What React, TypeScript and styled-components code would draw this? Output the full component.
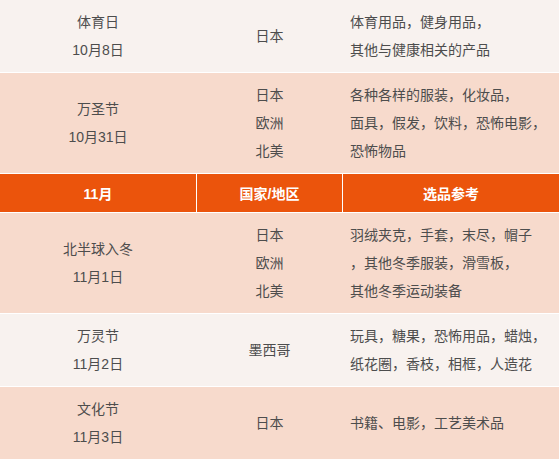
import React from "react";
import styled, { createGlobalStyle } from "styled-components";

type Tone = "light" | "peach";

interface rowInterface {
  tone: Tone;
  height: number;
  name: string[];
  places: string[];
  goods: string[];
}

const GlobalStyle = createGlobalStyle`
  html, body {
    margin: 0;
    padding: 0;
    background: #fff;
  }
  body {
    font-family: "Liberation Sans", "Noto Sans CJK SC", sans-serif;
    font-size: 14px;
    color: #4d4d4d;
  }
`;

const rowsBefore: rowInterface[] = [
  {
    tone: "light",
    height: 72,
    name: ["体育日", "10月8日"],
    places: ["日本"],
    goods: ["体育用品，健身用品，", "其他与健康相关的产品"],
  },
  {
    tone: "peach",
    height: 100,
    name: ["万圣节", "10月31日"],
    places: ["日本", "欧洲", "北美"],
    goods: ["各种各样的服装，化妆品，", "面具，假发，饮料，恐怖电影，", "恐怖物品"],
  },
];

const rowsAfter: rowInterface[] = [
  {
    tone: "peach",
    height: 100,
    name: ["北半球入冬", "11月1日"],
    places: ["日本", "欧洲", "北美"],
    goods: ["羽绒夹克，手套，末尽，帽子", "，其他冬季服装，滑雪板，", "其他冬季运动装备"],
  },
  {
    tone: "light",
    height: 72,
    name: ["万灵节", "11月2日"],
    places: ["墨西哥"],
    goods: ["玩具，糖果，恐怖用品，蜡烛，", "纸花圈，香枝，相框，人造花"],
  },
  {
    tone: "peach",
    height: 72,
    name: ["文化节", "11月3日"],
    places: ["日本"],
    goods: ["书籍、电影，工艺美术品"],
  },
];

const BodyRow = ({ row }: { row: rowInterface }) => (
  <Row tone={row.tone} h={row.height}>
    <Cell>
      {row.name.map((t, i) => (
        <Line key={i}>{t}</Line>
      ))}
    </Cell>
    <Cell>
      {row.places.map((t, i) => (
        <Line key={i}>{t}</Line>
      ))}
    </Cell>
    <Cell align="left">
      {row.goods.map((t, i) => (
        <Line key={i}>{t}</Line>
      ))}
    </Cell>
  </Row>
);

export default function App() {
  return (
    <>
      <GlobalStyle />
      <Table>
        {rowsBefore.map((row, i) => (
          <BodyRow row={row} key={i} />
        ))}
        <HeadRow>
          <HeadCell>11月</HeadCell>
          <HeadCell>国家/地区</HeadCell>
          <HeadCell>选品参考</HeadCell>
        </HeadRow>
        {rowsAfter.map((row, i) => (
          <BodyRow row={row} key={i} />
        ))}
      </Table>
    </>
  );
}

const Table = styled.div`
  width: 559px;
  height: 459px;
  overflow: hidden;
  display: flex;
  flex-direction: column;
  gap: 1px;
  background: #fff;
`;

const Row = styled.div<{ tone: Tone; h: number }>`
  flex: none;
  height: ${(p) => p.h}px;
  display: grid;
  grid-template-columns: 196px 145px 216px;
  column-gap: 1px;
  background: ${(p) => (p.tone === "light" ? "#f8f2ef" : "#f7dacc")};
`;

const HeadRow = styled.div`
  flex: none;
  height: 38px;
  display: grid;
  grid-template-columns: 196px 145px 216px;
  column-gap: 1px;
  background: #fff;
`;

const HeadCell = styled.div`
  display: flex;
  align-items: center;
  justify-content: center;
  background: #eb540c;
  color: #fff;
  font-weight: bold;
  font-size: 14px;
`;

const Cell = styled.div<{ align?: "left" | "center" }>`
  display: flex;
  flex-direction: column;
  justify-content: center;
  align-items: ${(p) => (p.align === "left" ? "flex-start" : "center")};
  padding-left: ${(p) => (p.align === "left" ? "7px" : "0")};
`;

const Line = styled.div`
  line-height: 28px;
  white-space: nowrap;
`;
